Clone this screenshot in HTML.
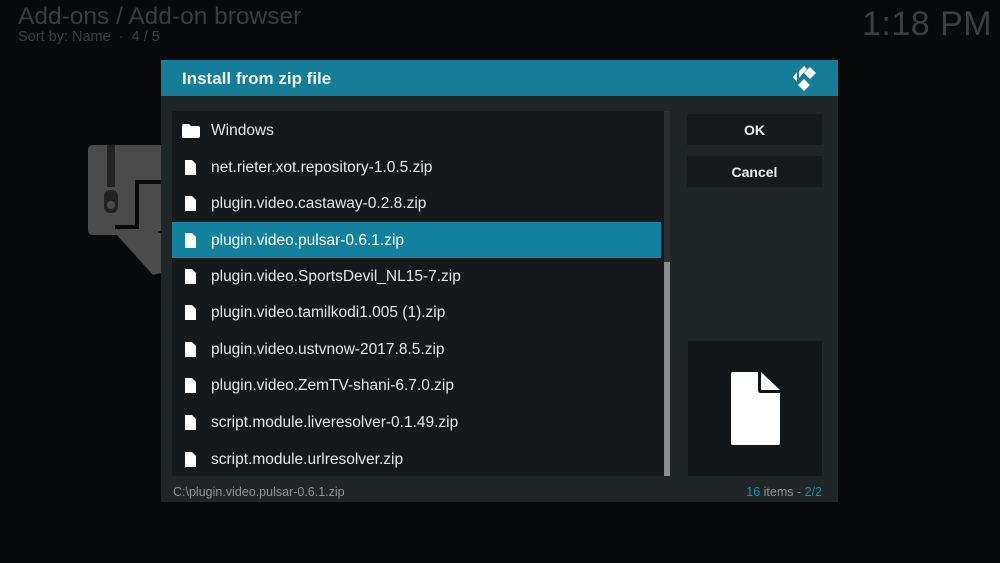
<!DOCTYPE html>
<html><head><style>
*{margin:0;padding:0;box-sizing:border-box}
body{width:1000px;height:563px;background:#07090a;position:relative;overflow:hidden;font-family:"Liberation Sans","DejaVu Sans",sans-serif;color:#fff}
.abs{position:absolute}
.row{position:absolute;left:172px;width:489px;height:36px;font-size:15.5px;color:#e6e6e6;line-height:38px}
.row span{position:absolute;left:39px}
.row svg{position:absolute;left:13px;top:11px}
.btn{position:absolute;left:687px;width:135px;height:31px;background:#171a1c;text-align:center;line-height:32px;font-weight:bold;font-size:14px;color:#eee}
</style></head><body>
<div class="abs" style="left:18px;top:3px;font-size:24.5px;color:#3a3d3f">Add-ons / Add-on browser</div>
<div class="abs" style="left:18px;top:29px;font-size:14.5px;color:#3a3d3f">Sort by: Name &nbsp;·&nbsp; 4 / 5</div>
<div class="abs" style="left:862px;top:5px;font-size:34px;color:#3c3f41;letter-spacing:0.5px">1:18 PM</div>
<svg class="abs" style="left:86px;top:143px" width="80" height="135">
<path d="M7 2H75V88H72L72 92H7Q2 92 2 87V7Q2 2 7 2Z" fill="#4b4b4b"/>
<path d="M29 90H75V130L67 132Z" fill="#4b4b4b"/>
<path d="M75 39H51V84H29" stroke="#0a0b0c" stroke-width="4" fill="none"/>
<rect x="21" y="2" width="8" height="42" fill="#222"/>
<rect x="18" y="47" width="14" height="23" rx="6" fill="#222"/>
<circle cx="25" cy="62" r="4" fill="#4b4b4b"/>
</svg>
<div class="abs" style="left:161px;top:60px;width:677px;height:442px;background:#202528"></div>
<div class="abs" style="left:161px;top:60px;width:677px;height:36px;background:#167d98"></div>
<div class="abs" style="left:182px;top:69px;font-size:17px;font-weight:bold;color:#f2f2f2">Install from zip file</div>
<svg class="abs" style="left:785px;top:62px" width="36" height="32" viewBox="785 62 36 32">
<polygon points="797,72 797,82 793,77" fill="#fff"/>
<polygon points="799,71 804,66 807,69 799,78" fill="#fff"/>
<polygon points="810,67 816,73 810,79 804,73" fill="#fff"/>
<polygon points="804,79 810,85 804,91 798,85" fill="#fff"/>
</svg>
<div class="abs" style="left:172px;top:111px;width:498px;height:365px;background:#16191b"></div>
<div class="abs" style="left:664px;top:111px;width:6px;height:365px;background:#2b2f31"></div>
<div class="abs" style="left:664px;top:262px;width:6px;height:214px;background:#8a8c8d"></div>
<div class="abs" style="left:172px;top:222px;width:489px;height:36px;background:#12819d"></div>
<div class="row" style="top:112px"><svg width="18" height="14" viewBox="0 0 18 14" style="left:10px;top:12px"><path d="M0 2Q0 0 2 0H7L9 2H16Q18 2 18 4V12Q18 14 16 14H2Q0 14 0 12Z" fill="#fff"/></svg><span>Windows</span></div>
<div class="row" style="top:149px"><svg width="11" height="15" viewBox="0 0 11 15"><path d="M0 0H7L11 4V15H0Z" fill="#fff"/></svg><span>net.rieter.xot.repository-1.0.5.zip</span></div>
<div class="row" style="top:185px"><svg width="11" height="15" viewBox="0 0 11 15"><path d="M0 0H7L11 4V15H0Z" fill="#fff"/></svg><span>plugin.video.castaway-0.2.8.zip</span></div>
<div class="row" style="top:222px;color:#fff"><svg width="11" height="15" viewBox="0 0 11 15"><path d="M0 0H7L11 4V15H0Z" fill="#fff"/></svg><span>plugin.video.pulsar-0.6.1.zip</span></div>
<div class="row" style="top:258px"><svg width="11" height="15" viewBox="0 0 11 15"><path d="M0 0H7L11 4V15H0Z" fill="#fff"/></svg><span>plugin.video.SportsDevil_NL15-7.zip</span></div>
<div class="row" style="top:294px"><svg width="11" height="15" viewBox="0 0 11 15"><path d="M0 0H7L11 4V15H0Z" fill="#fff"/></svg><span>plugin.video.tamilkodi1.005 (1).zip</span></div>
<div class="row" style="top:331px"><svg width="11" height="15" viewBox="0 0 11 15"><path d="M0 0H7L11 4V15H0Z" fill="#fff"/></svg><span>plugin.video.ustvnow-2017.8.5.zip</span></div>
<div class="row" style="top:367px"><svg width="11" height="15" viewBox="0 0 11 15"><path d="M0 0H7L11 4V15H0Z" fill="#fff"/></svg><span>plugin.video.ZemTV-shani-6.7.0.zip</span></div>
<div class="row" style="top:404px"><svg width="11" height="15" viewBox="0 0 11 15"><path d="M0 0H7L11 4V15H0Z" fill="#fff"/></svg><span>script.module.liveresolver-0.1.49.zip</span></div>
<div class="row" style="top:441px"><svg width="11" height="15" viewBox="0 0 11 15"><path d="M0 0H7L11 4V15H0Z" fill="#fff"/></svg><span>script.module.urlresolver.zip</span></div>
<div class="btn" style="top:114px">OK</div>
<div class="btn" style="top:156px">Cancel</div>
<div class="abs" style="left:688px;top:341px;width:134px;height:135px;background:#121618"></div>
<svg class="abs" style="left:731px;top:372px" width="49" height="73" viewBox="0 0 49 73">
<path d="M2 0H27V18Q27 21 30 21H49V71Q49 73 47 73H2Q0 73 0 71V2Q0 0 2 0Z" fill="#fff"/>
<path d="M30 0L49 18H31Q30 18 30 17Z" fill="#fff"/>
</svg>
<div class="abs" style="left:173px;top:485px;font-size:12.5px;color:#8f9496">C:\plugin.video.pulsar-0.6.1.zip</div>
<div class="abs" style="right:178px;top:485px;font-size:12.5px;color:#8f9496"><span style="color:#1a8fb0">16</span> items - <span style="color:#1a8fb0">2/2</span></div>
</body></html>
